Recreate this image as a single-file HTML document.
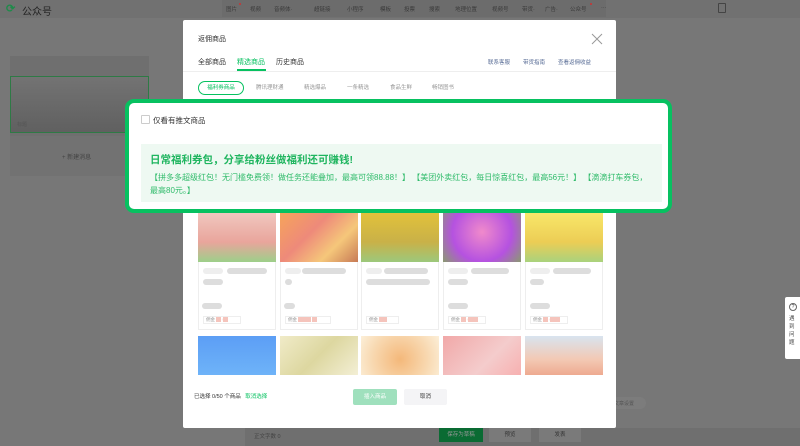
<!DOCTYPE html><html><head><meta charset="utf-8"><style>
*{margin:0;padding:0;box-sizing:border-box}
body{width:800px;height:446px;overflow:hidden;background:#777;font-family:"Liberation Sans","Noto Sans CJK SC",sans-serif;position:relative;font-size:6px;color:#333}
.a{position:absolute}
.nav{left:0;top:0;width:800px;height:18px;background:#717171}
.navc{left:222px;top:0;width:384px;height:17px;background:#6c6c6c}
.nt{top:5px;font-size:5.5px;color:#3a3a3a}
.modal{left:183px;top:20px;width:433px;height:408px;background:#fff;border-radius:2px}
.tab{top:57px;font-size:7px;color:#333}
.pill{top:83px;font-size:5.5px;color:#999}
.hl{left:125px;top:99px;width:547px;height:114px;border:4px solid #07c160;border-radius:9px;background:#fff}
.card{width:78px;height:118px;border:1px solid #eee;background:#fff}
.bar{background:#ddd;border-radius:3px;height:6px}
.img2{top:336px;width:78px;height:39px}
</style></head><body>
<div class="a nav"></div>
<div class="a" style="left:6px;top:2px;font-size:11px;color:#1f8a4a;font-weight:bold">&#10227;</div>
<div class="a" style="left:22px;top:3px;font-size:10px;color:#222">公众号</div>
<div class="a navc"></div>
<div class="a nt" style="left:226px">图片</div><div class="a" style="left:239px;top:3px;width:2px;height:2px;background:#c33;border-radius:1px"></div>
<div class="a nt" style="left:250px">视频</div><div class="a nt" style="left:274px">音频体·</div>
<div class="a nt" style="left:314px">超链接</div><div class="a nt" style="left:347px">小程序</div><div class="a nt" style="left:380px">模板</div>
<div class="a nt" style="left:404px">投票</div><div class="a nt" style="left:429px">搜索</div><div class="a nt" style="left:455px">地理位置</div>
<div class="a nt" style="left:492px">视频号</div><div class="a nt" style="left:522px">带货·</div><div class="a nt" style="left:545px">广告·</div><div class="a nt" style="left:570px">公众号</div>
<div class="a" style="left:590px;top:3px;width:2px;height:2px;background:#c33;border-radius:1px"></div>
<div class="a nt" style="left:601px">···</div>
<div class="a" style="left:718px;top:3px;width:8px;height:10px;border:1px solid #444;border-radius:1px"></div>
<div class="a" style="left:10px;top:56px;width:139px;height:80px;background:#6f6f6f"></div>
<div class="a" style="left:10px;top:76px;width:139px;height:57px;border:1px solid #2e7a45;background:linear-gradient(#737373,#606060)"></div>
<div class="a" style="left:17px;top:121px;font-size:5px;color:#555">标题</div>
<div class="a" style="left:10px;top:136px;width:139px;height:40px;background:#727272"></div>
<div class="a" style="left:62px;top:152px;font-size:6px;color:#444">+ 新建消息</div>
<div class="a" style="left:785px;top:297px;width:16px;height:62px;background:#fff;border-radius:2px 0 0 2px"></div>
<div class="a" style="left:789px;top:303px;width:8px;height:8px;border:1px solid #666;border-radius:50%;font-size:5px;text-align:center;line-height:6px">?</div>
<div class="a" style="left:789px;top:315px;width:8px;font-size:5.5px;line-height:8px;color:#444">遇到问题</div>
<div class="a" style="left:612px;top:397px;width:34px;height:12px;background:#7c7c7c;border-radius:6px;font-size:5px;color:#555;padding:3px 2px">文章设置</div>
<div class="a" style="left:245px;top:428px;width:555px;height:18px;background:#6f6f6f"></div>
<div class="a" style="left:254px;top:432px;font-size:5.5px;color:#444">正文字数 0</div>
<div class="a" style="left:439px;top:428px;width:44px;height:14px;background:#0a6b33;font-size:5.5px;color:#999;text-align:center;line-height:14px">保存为草稿</div>
<div class="a" style="left:489px;top:428px;width:42px;height:14px;background:#7a7a7a;font-size:5.5px;color:#333;text-align:center;line-height:14px">预览</div>
<div class="a" style="left:539px;top:428px;width:42px;height:14px;background:#7a7a7a;font-size:5.5px;color:#333;text-align:center;line-height:14px">发表</div>
<div class="a modal"></div>
<div class="a" style="left:198px;top:34px;font-size:7px;color:#333">返佣商品</div>
<svg class="a" style="left:591px;top:33px" width="12" height="12"><path d="M1 1L11 11M11 1L1 11" stroke="#999" stroke-width="1"/></svg>
<div class="a tab" style="left:198px">全部商品</div>
<div class="a tab" style="left:237px;color:#07c160">精选商品</div>
<div class="a" style="left:237px;top:69px;width:29px;height:1.5px;background:#07c160"></div>
<div class="a tab" style="left:276px">历史商品</div>
<div class="a" style="left:488px;top:58px;font-size:5.5px;color:#576b95">联系客服</div>
<div class="a" style="left:523px;top:58px;font-size:5.5px;color:#576b95">带货指南</div>
<div class="a" style="left:558px;top:58px;font-size:5.5px;color:#576b95">查看返佣收益</div>
<div class="a" style="left:183px;top:71px;width:433px;height:1px;background:#eee"></div>
<div class="a" style="left:198px;top:81px;width:46px;height:14px;border:1px solid #07c160;border-radius:7px;font-size:5.5px;color:#07c160;text-align:center;line-height:12px">福利券商品</div>
<div class="a pill" style="left:256px">腾讯理财通</div><div class="a pill" style="left:304px">精选爆品</div>
<div class="a pill" style="left:347px">一条精选</div><div class="a pill" style="left:390px">食品生鲜</div><div class="a pill" style="left:432px">畅销图书</div>
<div class="a card" style="left:198px;top:212px"></div><div class="a card" style="left:280px;top:212px"></div><div class="a card" style="left:361px;top:212px"></div><div class="a card" style="left:443px;top:212px"></div><div class="a card" style="left:525px;top:212px"></div>
<div class="a" style="left:198px;top:212px;width:78px;height:50px;background:linear-gradient(#f0c8c0,#e9a59c 60%,#9dcf8a)"></div>
<div class="a" style="left:280px;top:212px;width:78px;height:50px;background:linear-gradient(135deg,#f6a45a,#ee8a7a 40%,#f5c77a 70%,#c77a55)"></div>
<div class="a" style="left:361px;top:212px;width:78px;height:50px;background:linear-gradient(#e2c23a,#c9b148 60%,#9cc87c)"></div>
<div class="a" style="left:443px;top:212px;width:78px;height:50px;background:radial-gradient(circle at 50% 40%,#f08acb,#b552e0 60%,#8a9a70)"></div>
<div class="a" style="left:525px;top:212px;width:78px;height:50px;background:linear-gradient(#f9e86a,#eccd55 60%,#a9d27d)"></div>
<div class="a bar" style="left:203px;top:268px;width:20px;background:#eee"></div><div class="a bar" style="left:227px;top:268px;width:40px"></div><div class="a bar" style="left:203px;top:279px;width:20px"></div>
<div class="a bar" style="left:285px;top:268px;width:16px;background:#eee"></div><div class="a bar" style="left:302px;top:268px;width:44px"></div><div class="a bar" style="left:285px;top:279px;width:7px"></div>
<div class="a bar" style="left:366px;top:268px;width:16px;background:#eee"></div><div class="a bar" style="left:384px;top:268px;width:44px"></div><div class="a bar" style="left:366px;top:279px;width:64px"></div>
<div class="a bar" style="left:448px;top:268px;width:20px;background:#eee"></div><div class="a bar" style="left:471px;top:268px;width:38px"></div><div class="a bar" style="left:448px;top:279px;width:20px"></div>
<div class="a bar" style="left:530px;top:268px;width:20px;background:#eee"></div><div class="a bar" style="left:553px;top:268px;width:38px"></div><div class="a bar" style="left:530px;top:279px;width:14px"></div>
<div class="a bar" style="left:202px;top:303px;width:20px"></div><div class="a bar" style="left:284px;top:303px;width:11px"></div><div class="a bar" style="left:448px;top:303px;width:20px"></div><div class="a bar" style="left:530px;top:303px;width:20px"></div>
<div class="a" style="left:203px;top:316px;width:38px;height:8px;border:1px solid #eee;font-size:4.5px;color:#999;padding-left:2px">佣金 <span style="background:#f5c4bc;color:#f5c4bc">00</span> <span style="background:#f5c4bc;color:#f5c4bc">00</span></div>
<div class="a" style="left:285px;top:316px;width:46px;height:8px;border:1px solid #eee;font-size:4.5px;color:#999;padding-left:2px">佣金 <span style="background:#f5c4bc;color:#f5c4bc">00000</span> <span style="background:#f5c4bc;color:#f5c4bc">00</span></div>
<div class="a" style="left:366px;top:316px;width:33px;height:8px;border:1px solid #eee;font-size:4.5px;color:#999;padding-left:2px">佣金 <span style="background:#f5c4bc;color:#f5c4bc">000</span></div>
<div class="a" style="left:448px;top:316px;width:38px;height:8px;border:1px solid #eee;font-size:4.5px;color:#999;padding-left:2px">佣金 <span style="background:#f5c4bc;color:#f5c4bc">00</span> <span style="background:#f5c4bc;color:#f5c4bc">0000</span></div>
<div class="a" style="left:530px;top:316px;width:38px;height:8px;border:1px solid #eee;font-size:4.5px;color:#999;padding-left:2px">佣金 <span style="background:#f5c4bc;color:#f5c4bc">00</span> <span style="background:#f5c4bc;color:#f5c4bc">0000</span></div>
<div class="a img2" style="left:198px;background:linear-gradient(#5c9ef5,#6eb3f8)"></div>
<div class="a img2" style="left:280px;background:linear-gradient(135deg,#f0ebc8,#ddd7a0 50%,#f3efd5)"></div>
<div class="a img2" style="left:361px;background:radial-gradient(circle at 50% 60%,#f4b87a,#f8d8b0 60%,#fcefd8)"></div>
<div class="a img2" style="left:443px;background:linear-gradient(135deg,#f1a8a8,#f4cccc 60%,#f7b0b0)"></div>
<div class="a img2" style="left:525px;background:linear-gradient(#d8e4ef,#f3c9b4 60%,#eeaa90)"></div>
<div class="a" style="left:194px;top:392px;font-size:5.5px;color:#333">已选择 0/50 个商品 <span style="color:#07c160;margin-left:3px">取消选择</span></div>
<div class="a" style="left:353px;top:389px;width:44px;height:16px;background:#9fe0bd;border-radius:2px;font-size:5.5px;color:#fff;text-align:center;line-height:16px">插入商品</div>
<div class="a" style="left:404px;top:389px;width:43px;height:16px;background:#f4f4f6;border-radius:2px;font-size:5.5px;color:#333;text-align:center;line-height:16px">取消</div>
<div class="a hl"></div>
<div class="a" style="left:141px;top:115px;width:9px;height:9px;border:1px solid #ccc;border-radius:1px"></div>
<div class="a" style="left:153px;top:115px;font-size:7.5px;color:#333">仅看有推文商品</div>
<div class="a" style="left:141px;top:144px;width:521px;height:58px;background:#eef9f2"></div>
<div class="a" style="left:150px;top:152px;font-size:10.5px;font-weight:bold;color:#1fb55f;white-space:nowrap">日常福利券包，分享给粉丝做福利还可赚钱!</div>
<div class="a" style="left:150px;top:171px;width:500px;font-size:8px;line-height:13px;color:#2fbb6a">【拼多多超级红包！无门槛免费领！做任务还能叠加，最高可领88.88！】 【美团外卖红包，每日惊喜红包，最高56元！】 【滴滴打车券包，最高80元。】</div>
</body></html>
